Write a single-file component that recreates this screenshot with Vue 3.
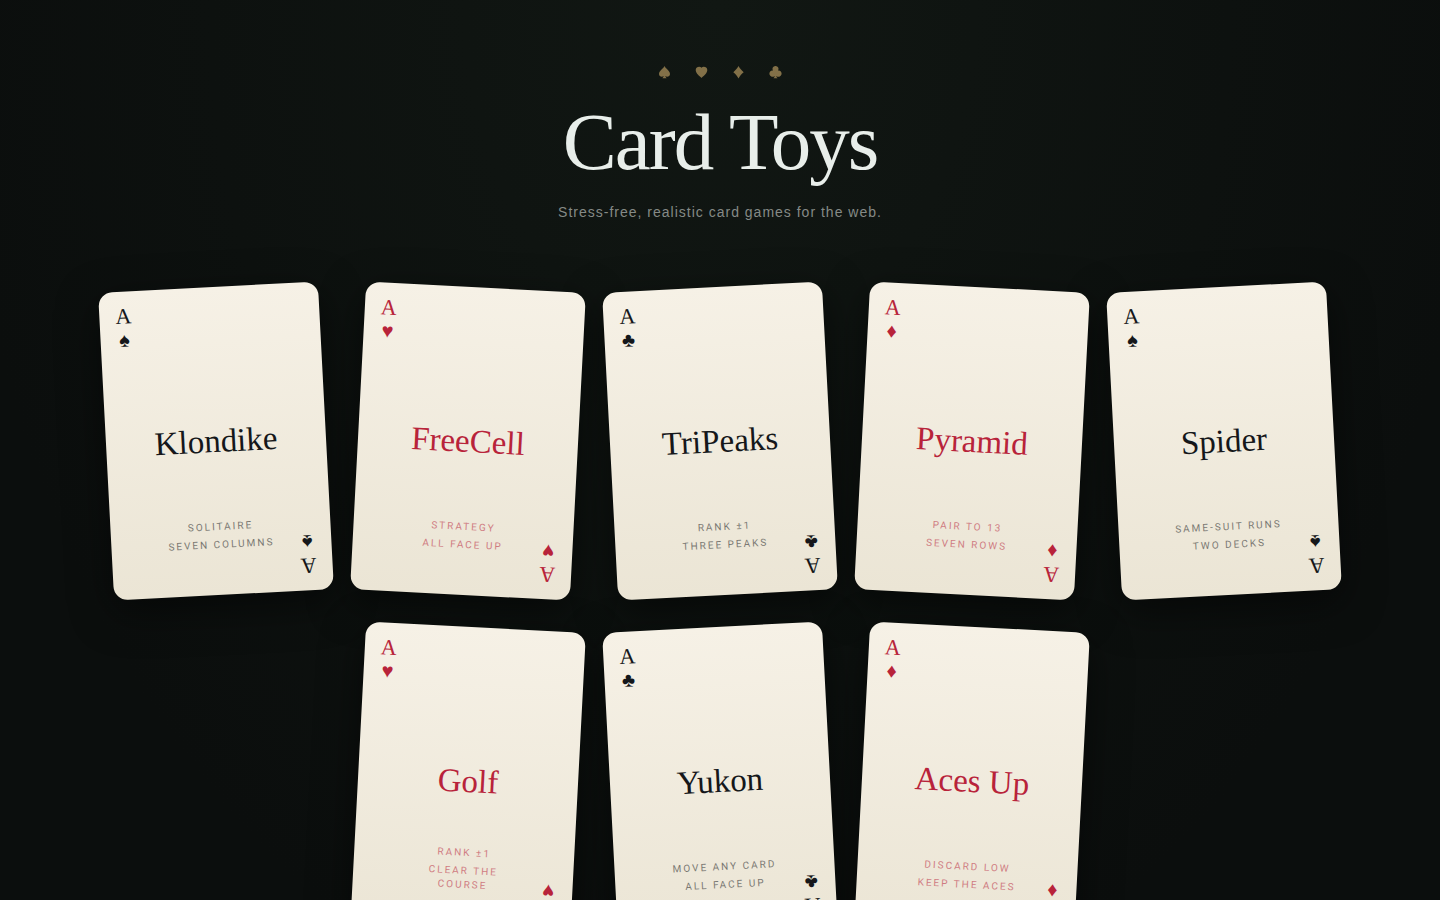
<template>
  <div class="page">
    <header class="hero">
      <div class="suits" aria-hidden="true">
        <svg v-for="path in suitPaths" :key="path" viewBox="0 0 13 13"><path :d="path" /></svg>
      </div>
      <h1>Card Toys</h1>
      <p class="tagline">Stress-free, realistic card games for the web.</p>
    </header>
    <main class="table">
      <a
        v-for="game in games"
        :key="game.name"
        class="card"
        :class="{ red: game.red }"
        :href="`#${game.slug}`"
      >
        <span class="face">
          <span class="corner"><span>A</span><span class="pip">{{ game.suit }}</span></span>
          <span class="name">{{ game.name }}</span>
          <span class="caption">
            <span v-for="line in game.caption" :key="line">{{ line }}</span>
          </span>
          <span class="corner flipped"><span>A</span><span class="pip">{{ game.suit }}</span></span>
        </span>
      </a>
    </main>
  </div>
</template>

<script setup>
const text = "\uFE0E"; // keeps the suits from turning into emoji
const spade = "♠" + text;
const heart = "♥" + text;
const diamond = "♦" + text;
const club = "♣" + text;

// spade, heart, diamond, club
const suitPaths = [
  "M6.5 0C7.6 2.6 12 4.9 12 8C12 10.6 8.9 11.3 7.4 10C7.4 10.9 7.8 11.2 8.6 12.2H4.4C5.2 11.2 5.6 10.9 5.6 10C4.1 11.3 1 10.6 1 8C1 4.9 5.4 2.6 6.5 0Z",
  "M6.5 11.9C5 10.2 .7 7.6 .7 3.9C.7 .5 5.2 -.2 6.5 1.7C7.8 -.2 12.3 .5 12.3 3.9C12.3 7.6 8 10.2 6.5 11.9Z",
  "M6.5 0C7.8 2.4 9.6 4.5 11.7 6.2C9.6 7.9 7.8 10 6.5 12.4C5.2 10 3.4 7.9 1.3 6.2C3.4 4.5 5.2 2.4 6.5 0Z",
  "M6.5 0A2.9 2.9 0 0 1 9 4.6A3.1 3.1 0 1 1 7.4 9.9C7.4 10.9 7.8 11.4 8.6 12.2H4.4C5.2 11.4 5.6 10.9 5.6 9.9A3.1 3.1 0 1 1 4 4.6A2.9 2.9 0 0 1 6.5 0Z",
];

const games = [
  { slug: "klondike", name: "Klondike", suit: spade, red: false, caption: ["Solitaire", "Seven columns"] },
  { slug: "freecell", name: "FreeCell", suit: heart, red: true, caption: ["Strategy", "All face up"] },
  { slug: "tripeaks", name: "TriPeaks", suit: club, red: false, caption: ["Rank ±1", "Three peaks"] },
  { slug: "pyramid", name: "Pyramid", suit: diamond, red: true, caption: ["Pair to 13", "Seven rows"] },
  { slug: "spider", name: "Spider", suit: spade, red: false, caption: ["Same-suit runs", "Two decks"] },
  { slug: "golf", name: "Golf", suit: heart, red: true, caption: ["Rank ±1", "Clear the course"] },
  { slug: "yukon", name: "Yukon", suit: club, red: false, caption: ["Move any card", "All face up"] },
  { slug: "aces-up", name: "Aces Up", suit: diamond, red: true, caption: ["Discard low", "Keep the aces"] },
];
</script>

<style>
body {
  background: #0b0e0d;
}
</style>

<style scoped>
.page {
  min-height: 100vh;
  box-sizing: border-box;
  padding: 64px 48px;
  background: radial-gradient(ellipse at 50% 0%, #111713 0%, #0b0e0d 75%);
  font-family: Roboto, "Liberation Sans", sans-serif;
}
.hero {
  display: flex;
  flex-direction: column;
  align-items: center;
  margin-bottom: 64px;
  text-align: center;
}
.suits {
  display: flex;
  align-items: center;
  gap: 24px;
  height: 16px;
}
.suits svg {
  width: 13px;
  height: 13px;
  overflow: visible;
  fill: #827048;
}
h1 {
  margin: 20px 0 17px;
  color: #e8eeea;
  font-family: "Liberation Serif", "Times New Roman", serif;
  font-size: 81px;
  font-weight: 400;
  line-height: 84px;
  letter-spacing: -2px;
}
.tagline {
  margin: 0;
  color: #858a86;
  font-family: "Liberation Sans", Arial, sans-serif;
  font-size: 14px;
  line-height: 22px;
  letter-spacing: 1px;
}
.table {
  display: flex;
  flex-wrap: wrap;
  justify-content: center;
  gap: 32px;
  max-width: 1240px;
  margin: 0 auto;
  isolation: isolate;
}
.card {
  --tilt: -3deg;
  position: relative;
  width: 220px;
  aspect-ratio: 5 / 7;
  color: #15171a;
  text-decoration: none;
}
.card:nth-child(even) {
  --tilt: 3deg;
}
.card.red {
  color: #b8233a;
}
/* the shadow lies under every card, so it never darkens a neighbour */
.card::before {
  content: "";
  position: absolute;
  inset: 0;
  z-index: -1;
  border-radius: 14px;
  box-shadow: 0 12px 40px rgba(0, 0, 0, 0.5);
  transform: rotate(var(--tilt));
}
.face {
  position: relative;
  display: flex;
  align-items: center;
  justify-content: center;
  height: 100%;
  border-radius: 14px;
  background: linear-gradient(#f6f1e6, #ebe5d5);
  transform: rotate(var(--tilt));
}
.name {
  font-family: "Liberation Serif", "Times New Roman", serif;
  font-size: 33px;
  line-height: 40px;
}
.corner {
  position: absolute;
  top: 14px;
  left: 16px;
  display: flex;
  flex-direction: column;
  align-items: center;
  font-family: "Liberation Serif", "Times New Roman", serif;
  font-size: 22px;
  line-height: 22px;
}
.corner.flipped {
  top: auto;
  left: auto;
  right: 16px;
  bottom: 14px;
  transform: rotate(180deg);
}
.pip {
  font-size: 20px;
  line-height: 24px;
}
.caption {
  position: absolute;
  right: 52px;
  bottom: 43px;
  left: 52px;
  display: flex;
  flex-direction: column;
  gap: 4px;
  font-size: 10px;
  line-height: 14px;
  letter-spacing: 2px;
  text-align: center;
  text-transform: uppercase;
  opacity: 0.55;
}
</style>
